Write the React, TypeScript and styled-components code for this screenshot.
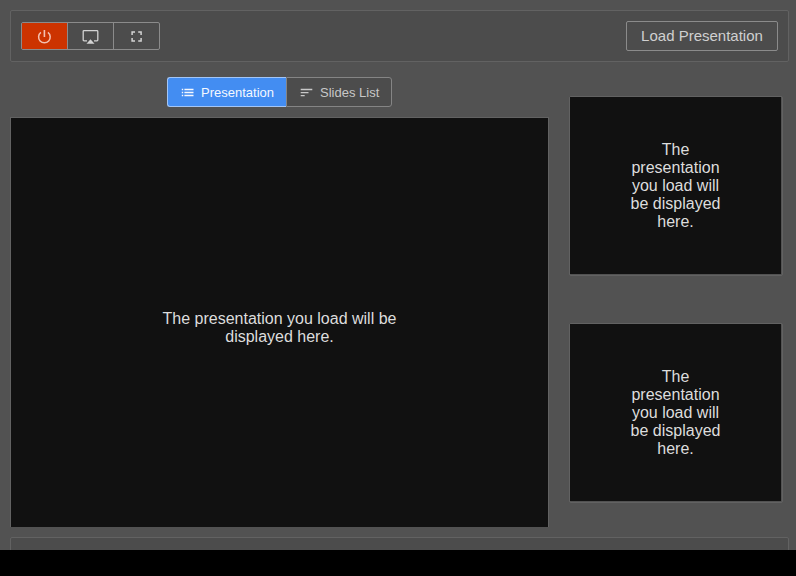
import React from "react";
import styled, { createGlobalStyle } from "styled-components";

const GlobalStyle = createGlobalStyle`
  *, *::before, *::after { box-sizing: border-box; }
  body {
    margin: 0;
    background: #000;
    color: #ddd;
    font-family: "Liberation Sans", Arial, sans-serif;
    overflow: hidden;
  }
  button { font-family: inherit; margin: 0; padding: 0; }
`;

const Page = styled.div`
  width: 796px;
  height: 550px;
  padding: 10px 7px 0 10px;
  background: #525252;
  overflow: hidden;
  display: flex;
  flex-direction: column;
`;

const Bar = styled.div`
  flex: none;
  height: 52px;
  width: 779px;
  padding: 0 10px;
  display: flex;
  align-items: center;
  justify-content: space-between;
  background: #4c4c4c;
  border: 1px solid #626262;
  border-radius: 2px;
`;

const IconGroup = styled.div`
  display: flex;
  height: 28px;
  border: 1px solid #8b8b8b;
  border-radius: 2px;
  overflow: hidden;
`;

const IconButton = styled.button<{ $danger?: boolean }>`
  width: 46px;
  display: flex;
  align-items: center;
  justify-content: center;
  border: 0;
  border-right: 1px solid #8b8b8b;
  color: ${(p) => (p.$danger ? "#f3c0b0" : "#d3d3d3")};
  background: ${(p) => (p.$danger ? "#cc3300" : "transparent")};
  &:last-child { border-right: 0; width: 45px; }
`;

const LoadButton = styled.button`
  width: 152px;
  height: 30px;
  color: #d0d0d0;
  font-size: 15px;
  line-height: 17px;
  padding-bottom: 2px;
  background: transparent;
  border: 1px solid #8b8b8b;
  border-radius: 2px;
`;

const Content = styled.div`
  flex: none;
  height: 475px;
  display: flex;
  justify-content: space-between;
`;

const Stage = styled.main`
  width: 539px;
  padding: 15px 0 10px;
  display: flex;
  flex-direction: column;
  align-items: center;
`;

const Tabs = styled.div`
  display: flex;
  height: 30px;
  margin-bottom: 10px;
`;

const Tab = styled.button<{ $active?: boolean }>`
  display: flex;
  align-items: center;
  gap: 5px;
  width: ${(p) => (p.$active ? 119 : 106)}px;
  padding-left: 12px;
  font-size: 13px;
  white-space: nowrap;
  color: ${(p) => (p.$active ? "#f4f8ff" : "#c8c8c8")};
  background: ${(p) => (p.$active ? "#438df2" : "#4c4c4c")};
  border: 1px solid ${(p) => (p.$active ? "#a3c6f7" : "#858585")};
  border-right-width: ${(p) => (p.$active ? 0 : 1)}px;
  border-radius: ${(p) => (p.$active ? "3px 0 0 3px" : "0 3px 3px 0")};
`;

const Screen = styled.div`
  flex: 1;
  width: 100%;
  padding: 10px 140px 0;
  display: flex;
  align-items: center;
  justify-content: center;
  text-align: center;
  font-size: 16px;
  line-height: 18px;
  background: #111;
  border: 1px solid #626262;
  border-bottom: 0;
`;

const Sidebar = styled.aside`
  width: 214px;
  margin-right: 6px;
  padding-top: 34px;
  display: flex;
  flex-direction: column;
  gap: 47px;
`;

const Preview = styled.div`
  height: 180px;
  padding: 0 1px 1px 0;
  border: 1px solid #626262;
  border-radius: 2px;
`;

const PreviewScreen = styled.div`
  height: 100%;
  padding: 0 55px;
  display: flex;
  align-items: center;
  justify-content: center;
  text-align: center;
  font-size: 16px;
  line-height: 18px;
  background: #111;
`;

const PowerIcon = () => (
  <svg width="17" height="18" viewBox="0 0 17 18" fill="none" stroke="currentColor">
    <path d="M8.4 3v7" strokeWidth="1.6" />
    <path d="M4.9 5.4A5.8 5.8 0 1 0 11.9 5.4" strokeWidth="1.5" />
  </svg>
);

const AirplayIcon = () => (
  <svg width="17" height="18" viewBox="0 0 17 18">
    <path
      d="M5 13.8H2a.8.8 0 0 1-.8-.8V4.4a.8.8 0 0 1 .8-.8h13a.8.8 0 0 1 .8.8V13a.8.8 0 0 1-.8.8h-3"
      fill="none"
      stroke="currentColor"
      strokeWidth="1.3"
    />
    <path d="M8.5 12.2l4 4.5h-8z" fill="currentColor" />
  </svg>
);

const FullscreenIcon = () => (
  <svg width="17" height="18" viewBox="0 0 17 18" fill="none" stroke="currentColor" strokeWidth="1.5">
    <path d="M4.1 8V5.1H7M10.2 5.1h2.9V8M13.1 11v2.9h-2.9M7 13.9H4.1V11" />
  </svg>
);

const ListIcon = () => (
  <svg width="16" height="16" viewBox="0 0 16 16" fill="none" stroke="currentColor" strokeWidth="1.5">
    <path d="M1.8 5.6h1.4M4.4 5.6h9.1M1.8 8.5h1.4M4.4 8.5h9.1M1.8 11.4h1.4M4.4 11.4h9.1" />
  </svg>
);

const SortIcon = () => (
  <svg width="16" height="16" viewBox="0 0 16 16" fill="none" stroke="currentColor" strokeWidth="1.3">
    <path d="M1.7 5.5h11.6M1.7 8.6h7.8M1.7 11.7h4" />
  </svg>
);

const message = "The presentation you load will be displayed here.";

export default function App() {
  return (
    <>
      <GlobalStyle />
      <Page>
        <Bar>
          <IconGroup>
            <IconButton $danger aria-label="Power"><PowerIcon /></IconButton>
            <IconButton aria-label="Display"><AirplayIcon /></IconButton>
            <IconButton aria-label="Fullscreen"><FullscreenIcon /></IconButton>
          </IconGroup>
          <LoadButton>Load Presentation</LoadButton>
        </Bar>
        <Content>
          <Stage>
            <Tabs>
              <Tab $active><ListIcon />Presentation</Tab>
              <Tab><SortIcon />Slides List</Tab>
            </Tabs>
            <Screen>{message}</Screen>
          </Stage>
          <Sidebar>
            <Preview><PreviewScreen>{message}</PreviewScreen></Preview>
            <Preview><PreviewScreen>{message}</PreviewScreen></Preview>
          </Sidebar>
        </Content>
        <Bar />
      </Page>
    </>
  );
}
